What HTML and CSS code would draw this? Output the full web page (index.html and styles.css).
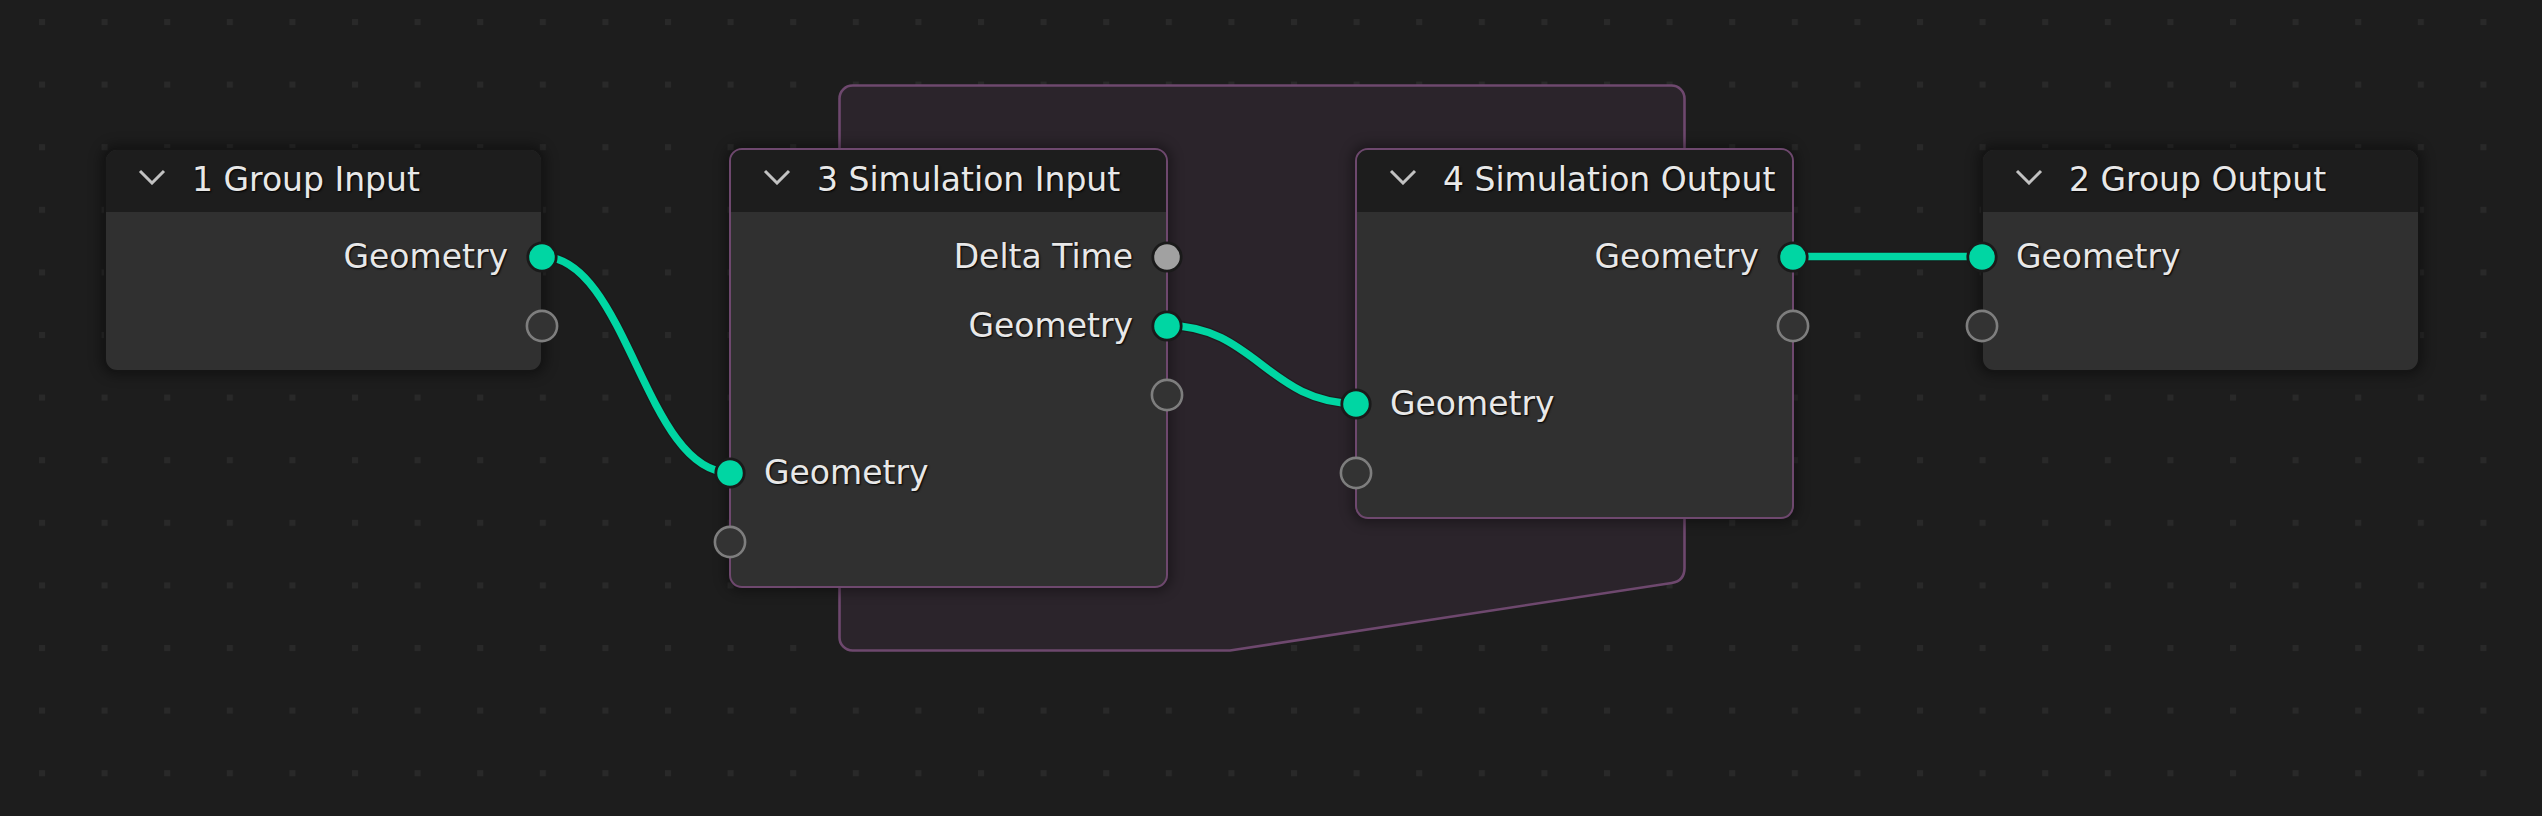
FILE: index.html
```html
<!DOCTYPE html>
<html>
<head>
<meta charset="utf-8">
<title>Node Editor</title>
<link rel="stylesheet" href="styles.css">
</head>
<body>
<div class="canvas">
  <svg class="backdrop" width="2542" height="816" viewBox="0 0 2542 816">
    <defs>
      <pattern id="dots" x="39" y="19" width="62.6" height="62.6" patternUnits="userSpaceOnUse">
        <rect width="6" height="6" fill="#292929"/>
      </pattern>
    </defs>
    <rect width="2542" height="816" fill="url(#dots)"/>
    <path class="zone" d="M852.5 85.5 H1671.5 A13 13 0 0 1 1684.5 98.5 V568 Q1684.5 581 1671.65 582.97 L1230 650.5 H852.5 A13 13 0 0 1 839.5 637.5 V98.5 A13 13 0 0 1 852.5 85.5 Z"/>
    <g class="link-under">
      <path d="M542 256.5 C627 256.5 645 472.5 730 472.5"/>
      <path d="M1167 325.5 C1254 325.5 1269 403.5 1356 403.5"/>
      <path d="M1793 256.5 H1982"/>
    </g>
    <g class="link">
      <path d="M542 256.5 C627 256.5 645 472.5 730 472.5"/>
      <path d="M1167 325.5 C1254 325.5 1269 403.5 1356 403.5"/>
      <path d="M1793 256.5 H1982"/>
    </g>
  </svg>

  <div class="node group n1">
    <div class="hdr">
      <svg class="chev" viewBox="0 0 28 16"><polyline points="2,2 14,14 26,2"/></svg>
      <span class="title">1 Group Input</span>
    </div>
    <div class="body">
      <div class="row out"><span class="lbl">Geometry</span><svg class="sock" viewBox="0 0 34 34"><circle class="geo" cx="17" cy="17" r="14.2"/></svg></div>
      <div class="row out"><svg class="sock" viewBox="0 0 34 34"><circle class="empty" cx="17" cy="17" r="15.1"/></svg></div>
    </div>
  </div>

  <div class="node zoned n3">
    <div class="hdr">
      <svg class="chev" viewBox="0 0 28 16"><polyline points="2,2 14,14 26,2"/></svg>
      <span class="title">3 Simulation Input</span>
    </div>
    <div class="body">
      <div class="row out"><span class="lbl">Delta Time</span><svg class="sock" viewBox="0 0 34 34"><circle class="float" cx="17" cy="17" r="14.2"/></svg></div>
      <div class="row out"><span class="lbl">Geometry</span><svg class="sock" viewBox="0 0 34 34"><circle class="geo" cx="17" cy="17" r="14.2"/></svg></div>
      <div class="row out"><svg class="sock" viewBox="0 0 34 34"><circle class="empty" cx="17" cy="17" r="15.1"/></svg></div>
      <div class="sep"></div>
      <div class="row in"><svg class="sock" viewBox="0 0 34 34"><circle class="geo" cx="17" cy="17" r="14.2"/></svg><span class="lbl">Geometry</span></div>
      <div class="row in"><svg class="sock" viewBox="0 0 34 34"><circle class="empty" cx="17" cy="17" r="15.1"/></svg></div>
    </div>
  </div>

  <div class="node zoned n4">
    <div class="hdr">
      <svg class="chev" viewBox="0 0 28 16"><polyline points="2,2 14,14 26,2"/></svg>
      <span class="title">4 Simulation Output</span>
    </div>
    <div class="body">
      <div class="row out"><span class="lbl">Geometry</span><svg class="sock" viewBox="0 0 34 34"><circle class="geo" cx="17" cy="17" r="14.2"/></svg></div>
      <div class="row out"><svg class="sock" viewBox="0 0 34 34"><circle class="empty" cx="17" cy="17" r="15.1"/></svg></div>
      <div class="sep"></div>
      <div class="row in"><svg class="sock" viewBox="0 0 34 34"><circle class="geo" cx="17" cy="17" r="14.2"/></svg><span class="lbl">Geometry</span></div>
      <div class="row in"><svg class="sock" viewBox="0 0 34 34"><circle class="empty" cx="17" cy="17" r="15.1"/></svg></div>
    </div>
  </div>

  <div class="node group n2">
    <div class="hdr">
      <svg class="chev" viewBox="0 0 28 16"><polyline points="2,2 14,14 26,2"/></svg>
      <span class="title">2 Group Output</span>
    </div>
    <div class="body">
      <div class="row in"><svg class="sock" viewBox="0 0 34 34"><circle class="geo" cx="17" cy="17" r="14.2"/></svg><span class="lbl">Geometry</span></div>
      <div class="row in"><svg class="sock" viewBox="0 0 34 34"><circle class="empty" cx="17" cy="17" r="15.1"/></svg></div>
    </div>
  </div>
</div>
</body>
</html>
```

FILE: styles.css
```css
html, body {
  margin: 0;
  padding: 0;
  background: #1d1d1d;
}

.canvas {
  position: relative;
  width: 2542px;
  height: 816px;
  overflow: hidden;
  background: #1d1d1d;
  font-family: "DejaVu Sans", "Liberation Sans", sans-serif;
}

.backdrop {
  position: absolute;
  left: 0;
  top: 0;
  display: block;
}

.zone {
  fill: #2b242b;
  stroke: #6e486e;
  stroke-width: 2.6;
}

.link-under path {
  fill: none;
  stroke: #151515;
  stroke-opacity: 0.55;
  stroke-width: 10;
}

.link path {
  fill: none;
  stroke: #00d6a3;
  stroke-width: 7.5;
}

.node {
  position: absolute;
  top: 148px;
  width: 439px;
  box-sizing: border-box;
  border: 2px solid #151515;
  border-radius: 13px;
  background: #303030;
  box-shadow: 0 0 12px 4px rgba(0, 0, 0, 0.35);
  font-size: 33px;
  color: #e6e6e6;
}

.node.zoned {
  border-color: #6e486e;
}

.n1 { left: 104px; }
.n3 { left: 729px; }
.n4 { left: 1355px; }
.n2 { left: 1981px; }

.hdr {
  height: 62px;
  box-sizing: border-box;
  padding-left: 32px;
  padding-bottom: 4px;
  background: #1d1d1d;
  border-radius: 11px 11px 0 0;
  display: flex;
  align-items: center;
}

.chev {
  width: 28px;
  height: 16px;
  flex: none;
  margin-right: 26px;
  margin-bottom: 4px;
}

.chev polyline {
  fill: none;
  stroke: #c2c2c2;
  stroke-width: 3;
}

.title,
.lbl {
  white-space: nowrap;
  color: #e8e8e8;
  text-shadow: 1px 1px 2px #000;
}

.body {
  display: flex;
  flex-direction: column;
  padding: 10px 0;
}

.row {
  height: 69px;
  display: flex;
  align-items: center;
  gap: 17px;
}

.row.out {
  justify-content: flex-end;
  margin-right: -18px;
}

.row.in {
  justify-content: flex-start;
  margin-left: -18px;
}

.sep {
  height: 9px;
}

.sock {
  width: 34px;
  height: 34px;
  flex: none;
  display: block;
}

.sock .geo {
  fill: #00d6a3;
  stroke: #1a1a1a;
  stroke-width: 2.8;
}

.sock .float {
  fill: #a1a1a1;
  stroke: #1a1a1a;
  stroke-width: 2.8;
}

.sock .empty {
  fill: #333333;
  stroke: #7e7e7e;
  stroke-width: 2.6;
}
```
